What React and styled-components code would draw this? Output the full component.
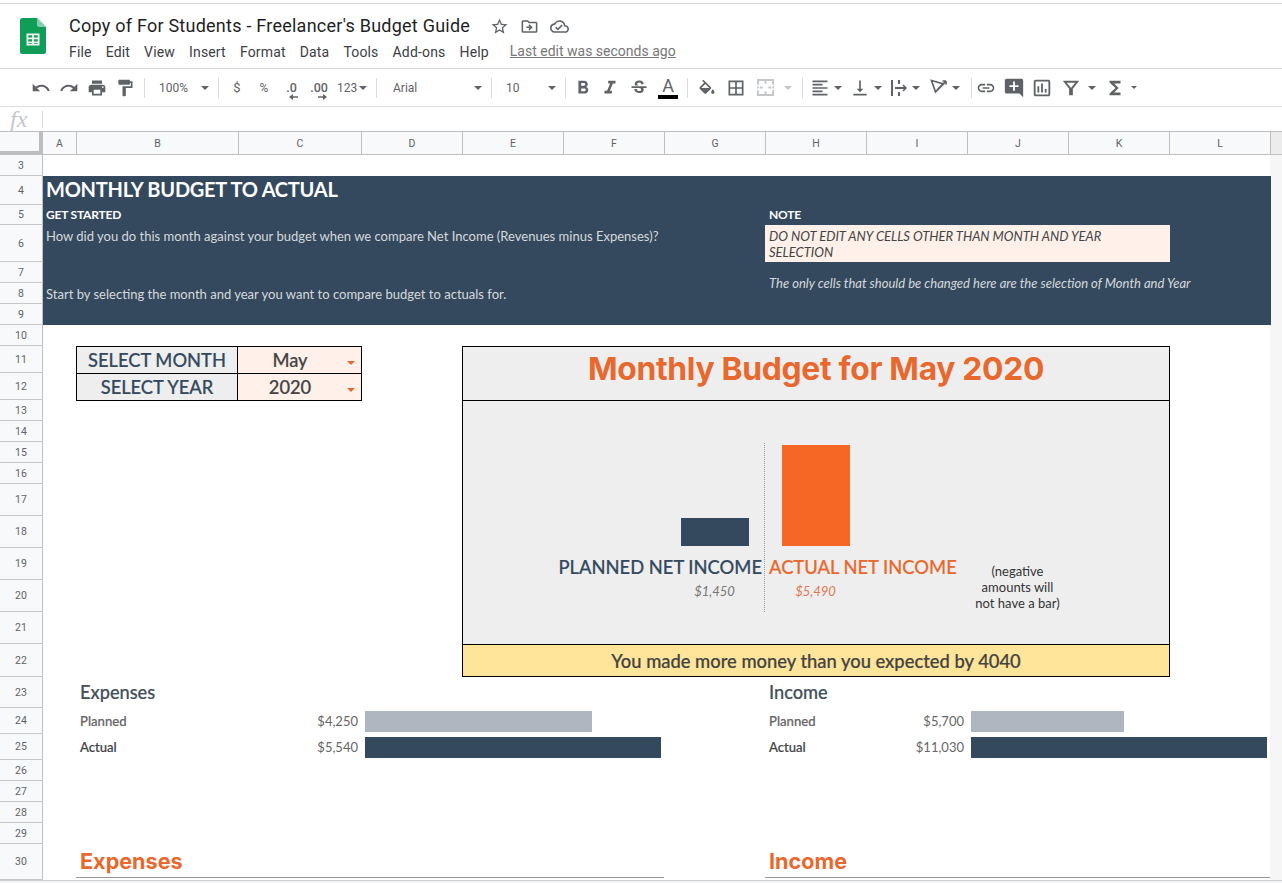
import React from 'react';
import styled, { createGlobalStyle } from 'styled-components';
import {
  MdUndo, MdRedo, MdPrint, MdFormatPaint, MdFormatBold, MdFormatItalic, MdStrikethroughS,
  MdBorderAll, MdFormatAlignLeft, MdVerticalAlignBottom, MdLink,
  MdAddComment, MdOutlineInsertChart, MdFunctions, MdStarBorder, MdOutlineDriveFileMove,
  MdOutlineCloudDone,
} from 'react-icons/md';

const NAVY = '#34495e';
const ORANGE = '#e8692e';
const PEACH = '#fff0ea';

const COL = { A: 2, B: 3, C: 4, D: 5, E: 6, F: 7, G: 8, H: 9, I: 10, J: 11, K: 12, L: 13 };
const COL_NAMES = ['A', 'B', 'C', 'D', 'E', 'F', 'G', 'H', 'I', 'J', 'K', 'L'];
const ROW_HEIGHTS = {
  3: 21, 4: 29, 5: 20, 6: 37, 7: 21, 8: 21, 9: 21, 10: 21, 11: 27, 12: 27, 13: 21, 14: 21, 15: 21, 16: 21,
  17: 32, 18: 32, 19: 32, 20: 32, 21: 32, 22: 33, 23: 31, 24: 26, 25: 26, 26: 21, 27: 21, 28: 21, 29: 21, 30: 36,
};
const ROW_NUMBERS = Object.keys(ROW_HEIGHTS).map(Number);

const GlobalStyle = createGlobalStyle`
  html, body {
    margin: 0;
    padding: 0;
    background: #fff;
    overflow: hidden;
  }
  * {
    box-sizing: border-box;
  }
`;

const Page = styled.div`
  width: 1282px;
  height: 883px;
  overflow: hidden;
  display: flex;
  flex-direction: column;
  font-family: Roboto, "Liberation Sans", sans-serif;
  padding-top: 3px;
`;

const Header = styled.header`
  height: 65px;
  border-top: 1px solid #dcdcdc;
  display: flex;
  padding: 14px 0 0 20px;
`;

const HeaderText = styled.div`
  margin-left: 23px;
  display: flex;
  flex-direction: column;
`;

const TitleRow = styled.div`
  display: flex;
  align-items: center;
  height: 16px;
`;

const DocTitle = styled.div`
  font-size: 18px;
  line-height: 16px;
  color: #1f1f1f;
  letter-spacing: 0.24px;
  width: 415px;
  white-space: nowrap;
`;

const TitleIcon = styled.span`
  width: 30px;
  display: flex;
  justify-content: center;
  color: #5f6368;
  font-size: 19px;
`;

const MenuRow = styled.nav`
  display: flex;
  align-items: center;
  margin-top: 9px;
  height: 18px;
`;

const MenuItem = styled.span`
  font-size: 14px;
  letter-spacing: 0.17px;
  color: #3c4043;
  margin-right: 14px;
  white-space: nowrap;
`;

const LastEdit = styled.span`
  font-size: 14px;
  color: #777;
  text-decoration: underline;
  margin: -2px 0 0 7px;
  white-space: nowrap;
`;

const Toolbar = styled.div`
  height: 39px;
  border-top: 1px solid #dadce0;
  border-bottom: 1px solid #dadce0;
  display: flex;
  align-items: center;
  padding-left: 27px;
  flex-shrink: 0;
`;

const ToolButton = styled.div`
  width: ${p => p.$w || 28}px;
  height: 28px;
  display: flex;
  align-items: center;
  justify-content: ${p => (p.$split ? 'flex-start' : 'center')};
  padding-left: ${p => (p.$split ? 2 : 0)}px;
  color: ${p => (p.$muted ? '#c4c7ca' : '#5f6368')};
  font-size: ${p => p.$size || 20}px;
  flex-shrink: 0;
`;

const ToolText = styled.span`
  font-size: ${p => p.$size};
  color: #5f6368;
  line-height: 1;
`;

const ToolSelect = styled.div`
  width: ${p => p.$w}px;
  height: 28px;
  padding-left: ${p => p.$pad}px;
  display: flex;
  align-items: center;
  justify-content: space-between;
  padding-right: 4px;
  font-size: 12px;
  color: #5f6368;
  flex-shrink: 0;
`;

const Separator = styled.div`
  width: 1px;
  height: 20px;
  background: #dadce0;
  margin: 0 ${p => p.$r ?? 5}px 0 ${p => p.$l ?? 5}px;
  flex-shrink: 0;
`;

const Caret = styled.span`
  width: 0;
  height: 0;
  border-left: ${p => p.$half || 4}px solid transparent;
  border-right: ${p => p.$half || 4}px solid transparent;
  border-top: ${p => p.$half || 4}px solid ${p => (p.$muted ? '#c4c7ca' : '#5f6368')};
  margin-left: ${p => p.$gap || 0}px;
  flex-shrink: 0;
`;

const DecimalMark = styled.div`
  display: flex;
  flex-direction: column;
  align-items: center;
  padding-top: 7px;
  font-size: 12.5px;
  font-weight: 500;
  color: #5f6368;
  line-height: 12px;
`;

const DecimalArrow = styled.svg`
  width: 9px;
  height: 6px;
  margin: 0 0 0 ${p => p.$shift}px;
`;

const TextColorMark = styled.div`
  display: flex;
  flex-direction: column;
  align-items: center;
  width: 20px;
  font-size: 18px;
  line-height: 17px;
  color: #5f6368;
`;

const ColorBar = styled.div`
  width: 20px;
  height: 4px;
  background: #000;
  margin-top: 1px;
`;

const FormulaBar = styled.div`
  height: 24px;
  display: flex;
  align-items: center;
  flex-shrink: 0;
`;

const FxMark = styled.span`
  width: 42px;
  padding-left: 10px;
  font-family: "Liberation Serif", serif;
  font-style: italic;
  font-size: 24px;
  line-height: 24px;
  color: #c4c7ca;
`;

const FormulaDivider = styled.div`
  width: 1px;
  height: 17px;
  background: #dadce0;
`;

const SheetGrid = styled.div`
  display: grid;
  grid-template-columns: 43px 33px 162px 123px repeat(9, 101px) 12px;
  grid-template-rows: 23px ${ROW_NUMBERS.map(n => `${ROW_HEIGHTS[n]}px`).join(' ')};
  flex-shrink: 0;
  font-family: Lato, "Liberation Sans", sans-serif;
  border-top: 1px solid #c0c0c0;
  height: 749px;
  overflow: hidden;
`;

const Corner = styled.div`
  grid-column: 1;
  grid-row: 1;
  background: #f8f9fa;
  border-right: 4px solid #bdbdbd;
  border-bottom: 4px solid #bdbdbd;
`;

const ColumnHead = styled.div`
  grid-row: 1;
  grid-column: ${p => COL[p.$name]};
  background: #f8f9fa;
  border-left: ${p => (p.$name === 'A' ? 'none' : '1px solid #c0c0c0')};
  border-bottom: 1px solid #c0c0c0;
  display: flex;
  align-items: center;
  justify-content: center;
  font-family: Roboto, sans-serif;
  font-size: 10.5px;
  color: #5f6368;
`;

const RowHead = styled.div`
  grid-column: 1;
  grid-row: ${p => p.$n - 1};
  background: #f8f9fa;
  border-right: 1px solid #c0c0c0;
  border-bottom: 1px solid #c8c8c8;
  display: flex;
  align-items: center;
  justify-content: center;
  font-family: Roboto, sans-serif;
  font-size: 10.5px;
  color: #5f6368;
`;

const ScrollTrack = styled.div`
  grid-column: 14;
  grid-row: 2 / -1;
  background: #f6f6f6;
`;

const ScrollCorner = styled.div`
  grid-column: 14;
  grid-row: 1;
  background: #ececec;
  border-left: 1px solid #c0c0c0;
  border-bottom: 1px solid #c0c0c0;
`;

const Cell = styled.div`
  grid-column: ${p => COL[p.$from]} / ${p => COL[p.$to || p.$from] + 1};
  grid-row: ${p => p.$top - 1} / ${p => p.$bottom || p.$top};
  min-width: 0;
  display: flex;
  align-items: center;
  white-space: nowrap;
`;

const Banner = styled(Cell)`
  background: ${NAVY};
  margin-right: -1px;
`;

const BannerHeading = styled(Cell)`
  padding: 0 0 3px 3px;
  font-size: 20px;
  letter-spacing: -0.25px;
  font-weight: 700;
  color: #fff;
`;

const BannerLabel = styled(Cell)`
  padding: 0 0 2px ${p => p.$pad || 3}px;
  font-size: 12px;
  font-weight: 700;
  color: #fff;
  letter-spacing: -0.2px;
`;

const BannerText = styled(Cell)`
  align-items: ${p => (p.$top === 6 ? 'flex-start' : 'center')};
  padding-top: ${p => (p.$top === 6 ? 3 : 0)}px;
  padding-left: ${p => p.$pad || 3}px;
  font-size: 13.03px;
  color: #d6d9dc;
  font-style: ${p => (p.$italic ? 'italic' : 'normal')};
`;

const NoteBox = styled(Cell)`
  background: ${PEACH};
  padding: 0 4px;
  margin-right: -1px;
  font-size: 13px;
  line-height: 16px;
  font-style: italic;
  color: #434343;
  white-space: normal;
`;

const SelectLabel = styled(Cell)`
  justify-content: center;
  background: #eeeeee;
  border: 1px solid #000;
  margin-bottom: ${p => (p.$last ? -1 : 0)}px;
  border-bottom: ${p => (p.$last ? '1px solid #000' : 'none')};
  font-size: 18.3px;
  font-weight: 500;
  -webkit-text-stroke: 0.2px;
  color: ${NAVY};
`;

const SelectValue = styled(Cell)`
  justify-content: center;
  padding-right: 19px;
  background: ${PEACH};
  border: 1px solid #000;
  border-left: none;
  margin-right: -1px;
  margin-bottom: ${p => (p.$last ? -1 : 0)}px;
  border-bottom: ${p => (p.$last ? '1px solid #000' : 'none')};
  font-size: 18.3px;
  font-weight: 500;
  -webkit-text-stroke: 0.2px;
  color: #434343;
  position: relative;
`;

const DropCaret = styled.span`
  position: absolute;
  right: 6px;
  top: 14px;
  border-left: 4px solid transparent;
  border-right: 4px solid transparent;
  border-top: 4px solid ${ORANGE};
`;

const ChartTitle = styled(Cell)`
  justify-content: center;
  background: #eeeeee;
  border: 1px solid #000;
  margin: 0 -1px -1px 0;
  padding-bottom: 10px;
  font-family: Inter, Lato, sans-serif;
  font-size: 31.8px;
  font-weight: 700;
  letter-spacing: -0.3px;
  color: ${ORANGE};
`;

const ChartBody = styled(Cell)`
  background: #eeeeee;
  border-left: 1px solid #000;
  border-right: 1px solid #000;
  margin-right: -1px;
`;

const DottedLine = styled(Cell)`
  border-right: 1px dotted #999;
  margin: 1px 0 0 0;
`;

const BarSlot = styled(Cell)`
  align-items: flex-end;
  justify-content: center;
  padding-bottom: 2px;
`;

const ChartBar = styled.div`
  width: 68px;
  height: ${p => p.$h}px;
  background: ${p => p.$color};
`;

const NetLabel = styled(Cell)`
  align-items: flex-end;
  justify-content: ${p => (p.$right ? 'flex-end' : 'flex-start')};
  padding: ${p => (p.$right ? '0 3px 2px 0' : '0 0 2px 4px')};
  font-size: 18.35px;
  font-weight: 500;
  -webkit-text-stroke: 0.2px;
  color: ${p => p.$color};
`;

const NetAmount = styled(Cell)`
  justify-content: center;
  align-items: flex-start;
  padding-top: 3px;
  font-size: 13px;
  font-style: italic;
  color: ${p => p.$color};
`;

const NegativeNote = styled(Cell)`
  justify-content: center;
  text-align: center;
  padding-top: 13px;
  font-size: 13px;
  line-height: 16px;
  color: #333;
  white-space: pre-line;
`;

const Verdict = styled(Cell)`
  justify-content: center;
  background: #ffe599;
  border: 1px solid #000;
  margin-right: -1px;
  font-size: 18.35px;
  font-weight: 500;
  -webkit-text-stroke: 0.2px;
  color: #434343;
`;

const GroupTitle = styled(Cell)`
  padding-left: 4px;
  padding-bottom: 2px;
  font-size: 18.2px;
  font-weight: 500;
  -webkit-text-stroke: 0.2px;
  color: #434f5b;
`;

const RowLabel = styled(Cell)`
  padding-left: 4px;
  font-size: 13.1px;
  font-weight: 500;
  -webkit-text-stroke: 0.2px;
  color: ${p => (p.$strong ? '#434343' : '#666')};
`;

const RowValue = styled(Cell)`
  justify-content: flex-end;
  padding-right: 3px;
  font-size: 13px;
  color: #666;
`;

const BarCell = styled(Cell)`
  padding-left: 4px;
`;

const MeterBar = styled.div`
  height: 21px;
  background: ${p => p.$color};
`;

const SectionTitle = styled(Cell)`
  padding-left: 4px;
  margin-bottom: 2px;
  border-bottom: 1px solid #999;
  font-family: Inter, Lato, sans-serif;
  font-size: 21.6px;
  font-weight: 700;
  color: ${ORANGE};
`;

const SheetFoot = styled.div`
  flex: 1;
  background: #f1f3f4;
  border-top: 1px solid #cfcfcf;
`;

const SheetsLogo = () => (
  <svg width="26" height="36" viewBox="0 0 26 36">
    <path d="M2.5 0H17l9 9v24.5a2.5 2.5 0 0 1-2.5 2.5h-21A2.5 2.5 0 0 1 0 33.5v-31A2.5 2.5 0 0 1 2.5 0z" fill="#0f9d58" />
    <path d="M17 0l9 9h-6.5A2.5 2.5 0 0 1 17 6.5z" fill="#87ceac" />
    <path d="M6.5 15.5h13v12h-13z M8.3 17.3v2.3h3.8v-2.3z M13.9 17.3v2.3h3.8v-2.3z M8.3 21.3v2.3h3.8v-2.3z M13.9 21.3v2.3h3.8v-2.3z M8.3 25v.8h3.8V25z M13.9 25v.8h3.8V25z" fill="#f1f1f1" fillRule="evenodd" />
  </svg>
);

const FillIcon = () => (
  <svg width="20" height="20" viewBox="0 0 24 20" fill="currentColor">
    <path d="M16.56 8.94L7.62 0 6.21 1.41l2.38 2.38-5.15 5.15c-.59.59-.59 1.54 0 2.12l5.5 5.5c.29.29.68.44 1.06.44s.77-.15 1.06-.44l5.5-5.5c.59-.58.59-1.53 0-2.12zM5.21 10L10 5.21 14.79 10H5.21zM19 11.5s-2 2.17-2 3.5c0 1.1.9 2 2 2s2-.9 2-2c0-1.33-2-3.5-2-3.5z" />
  </svg>
);

const MergeIcon = () => (
  <svg width="17" height="17" viewBox="0 0 18 18" fill="none" stroke="currentColor" strokeWidth="2">
    <path d="M1 6V1h16v5M1 12v5h16v-5M1 8v2M17 8v2M9 1v4M9 13v4M3 9h3M12 9h3" />
  </svg>
);

const WrapIcon = () => (
  <svg width="18" height="18" viewBox="0 0 18 18" fill="none" stroke="currentColor" strokeWidth="2">
    <path d="M2 1v16M9 1v4M9 8v2M9 13v4M5 9h10" />
    <path d="M13 6l3 3-3 3" strokeWidth="1.5" />
  </svg>
);

const RotateIcon = () => (
  <svg width="18" height="18" viewBox="0 0 18 18" fill="none" stroke="currentColor" strokeWidth="1.7">
    <path d="M1.5 1.5l12 3.5-8 8z" />
    <path d="M7 11l9-9M16 2h-3.5M16 2v3.5" />
  </svg>
);

const FunnelIcon = () => (
  <svg width="16" height="16" viewBox="0 0 18 18" fill="none" stroke="currentColor" strokeWidth="2.2">
    <path d="M2 2h14L10 9.5V16H8V9.5z" />
  </svg>
);

const ArrowLeft = () => (
  <DecimalArrow $shift={4} viewBox="0 0 9 6">
    <path d="M9 2.3H4V0L0 3l4 3V3.7h5z" fill="#5f6368" />
  </DecimalArrow>
);

const ArrowRight = () => (
  <DecimalArrow $shift={7} viewBox="0 0 9 6">
    <path d="M0 2.3h5V0l4 3-4 3V3.7H0z" fill="#5f6368" />
  </DecimalArrow>
);

const MENU = ['File', 'Edit', 'View', 'Insert', 'Format', 'Data', 'Tools', 'Add-ons', 'Help'];

const App = () => {
  return (
    <Page>
      <GlobalStyle />
      <Header>
        <SheetsLogo />
        <HeaderText>
          <TitleRow>
            <DocTitle>Copy of For Students - Freelancer's Budget Guide</DocTitle>
            <TitleIcon><MdStarBorder /></TitleIcon>
            <TitleIcon><MdOutlineDriveFileMove /></TitleIcon>
            <TitleIcon><MdOutlineCloudDone /></TitleIcon>
          </TitleRow>
          <MenuRow>
            {MENU.map(label => (
              <MenuItem key={label}>{label}</MenuItem>
            ))}
            <LastEdit>Last edit was seconds ago</LastEdit>
          </MenuRow>
        </HeaderText>
      </Header>

      <Toolbar>
        <ToolButton><MdUndo /></ToolButton>
        <ToolButton><MdRedo /></ToolButton>
        <ToolButton><MdPrint /></ToolButton>
        <ToolButton><MdFormatPaint /></ToolButton>
        <Separator />
        <ToolSelect $w={63} $pad={9}>100%<Caret /></ToolSelect>
        <Separator />
        <ToolButton $w={26}><ToolText $size="13px">$</ToolText></ToolButton>
        <ToolButton><ToolText $size="12px">%</ToolText></ToolButton>
        <ToolButton $w={27}><DecimalMark>.0<ArrowLeft /></DecimalMark></ToolButton>
        <ToolButton><DecimalMark>.00<ArrowRight /></DecimalMark></ToolButton>
        <ToolSelect $w={38} $pad={4}>123<Caret /></ToolSelect>
        <Separator />
        <ToolSelect $w={104} $pad={11}>Arial<Caret /></ToolSelect>
        <Separator />
        <ToolSelect $w={63} $pad={9}>10<Caret /></ToolSelect>
        <Separator />
        <ToolButton $w={23} $size={22}><MdFormatBold /></ToolButton>
        <ToolButton $w={32} $size={22}><MdFormatItalic /></ToolButton>
        <ToolButton $w={26} $size={20}><MdStrikethroughS /></ToolButton>
        <ToolButton $w={32}><TextColorMark>A<ColorBar /></TextColorMark></ToolButton>
        <Separator $l={3} />
        <ToolButton><FillIcon /></ToolButton>
        <ToolButton $w={30}><MdBorderAll /></ToolButton>
        <ToolButton $muted><MergeIcon /></ToolButton>
        <ToolButton $w={18}><Caret $muted /></ToolButton>
        <Separator />
        <ToolButton $w={40} $split><MdFormatAlignLeft /><Caret $gap={4} /></ToolButton>
        <ToolButton $w={40} $split><MdVerticalAlignBottom /><Caret $gap={4} /></ToolButton>
        <ToolButton $w={40} $split><WrapIcon /><Caret $gap={4} /></ToolButton>
        <ToolButton $w={40} $split><RotateIcon /><Caret $gap={4} /></ToolButton>
        <Separator $l={3} $r={0} />
        <ToolButton><MdLink /></ToolButton>
        <ToolButton $size={22}><MdAddComment /></ToolButton>
        <ToolButton $size={22}><MdOutlineInsertChart /></ToolButton>
        <ToolButton $w={29}><FunnelIcon /></ToolButton>
        <ToolButton $w={14}><Caret /></ToolButton>
        <ToolButton $w={32} $size={22}><MdFunctions /></ToolButton>
        <ToolButton $w={6}><Caret $half={3} /></ToolButton>
      </Toolbar>

      <FormulaBar>
        <FxMark>fx</FxMark>
        <FormulaDivider />
      </FormulaBar>

      <SheetGrid>
        <Corner />
        {COL_NAMES.map(name => <ColumnHead key={name} $name={name}>{name}</ColumnHead>)}
        <ScrollCorner />
        {ROW_NUMBERS.map(n => <RowHead key={n} $n={n}>{n}</RowHead>)}

        <ScrollTrack />
        <Banner $from="A" $to="L" $top={4} $bottom={9} />
        <BannerHeading $from="A" $to="F" $top={4}>MONTHLY BUDGET TO ACTUAL</BannerHeading>
        <BannerLabel $from="A" $to="F" $top={5}>GET STARTED</BannerLabel>
        <BannerText $from="A" $to="G" $top={6}>How did you do this month against your budget when we compare Net Income (Revenues minus Expenses)?</BannerText>
        <BannerText $from="A" $to="G" $top={8}>Start by selecting the month and year you want to compare budget to actuals for.</BannerText>
        <BannerLabel $from="H" $to="K" $top={5} $pad={4}>NOTE</BannerLabel>
        <NoteBox $from="H" $to="K" $top={6}>DO NOT EDIT ANY CELLS OTHER THAN MONTH AND YEAR SELECTION</NoteBox>
        <BannerText $from="H" $to="L" $top={7} $bottom={8} $pad={4} $italic>The only cells that should be changed here are the selection of Month and Year</BannerText>

        <SelectLabel $from="B" $top={11}>SELECT MONTH</SelectLabel>
        <SelectValue $from="C" $top={11}>May<DropCaret /></SelectValue>
        <SelectLabel $from="B" $top={12} $last>SELECT YEAR</SelectLabel>
        <SelectValue $from="C" $top={12} $last>2020<DropCaret /></SelectValue>

        <ChartBody $from="E" $to="K" $top={13} $bottom={21} />
        <ChartTitle $from="E" $to="K" $top={11} $bottom={12}>Monthly Budget for May 2020</ChartTitle>
        <DottedLine $from="G" $top={15} $bottom={20} />
        <BarSlot $from="G" $top={15} $bottom={18}><ChartBar $h={28} $color={NAVY} /></BarSlot>
        <BarSlot $from="H" $top={15} $bottom={18}><ChartBar $h={101} $color="#f66725" /></BarSlot>
        <NetLabel $from="E" $to="G" $top={19} $right $color={NAVY}>PLANNED NET INCOME</NetLabel>
        <NetLabel $from="H" $to="I" $top={19} $color={ORANGE}>ACTUAL NET INCOME</NetLabel>
        <NetAmount $from="G" $top={20} $color="#777">$1,450</NetAmount>
        <NetAmount $from="H" $top={20} $color="#e07a55">$5,490</NetAmount>
        <NegativeNote $from="J" $top={19} $bottom={20}>{'(negative\namounts will\nnot have a bar)'}</NegativeNote>
        <Verdict $from="E" $to="K" $top={22}>You made more money than you expected by 4040</Verdict>

        <GroupTitle $from="B" $top={23}>Expenses</GroupTitle>
        <RowLabel $from="B" $top={24}>Planned</RowLabel>
        <RowValue $from="C" $top={24}>$4,250</RowValue>
        <BarCell $from="D" $to="F" $top={24}><MeterBar style={{ width: 227 }} $color="#aeb6bf" /></BarCell>
        <RowLabel $from="B" $top={25} $strong>Actual</RowLabel>
        <RowValue $from="C" $top={25}>$5,540</RowValue>
        <BarCell $from="D" $to="F" $top={25}><MeterBar style={{ width: 296 }} $color={NAVY} /></BarCell>

        <GroupTitle $from="H" $top={23}>Income</GroupTitle>
        <RowLabel $from="H" $top={24}>Planned</RowLabel>
        <RowValue $from="I" $top={24}>$5,700</RowValue>
        <BarCell $from="J" $to="L" $top={24}><MeterBar style={{ width: 153 }} $color="#aeb6bf" /></BarCell>
        <RowLabel $from="H" $top={25} $strong>Actual</RowLabel>
        <RowValue $from="I" $top={25}>$11,030</RowValue>
        <BarCell $from="J" $to="L" $top={25}><MeterBar style={{ width: 296 }} $color={NAVY} /></BarCell>

        <SectionTitle $from="B" $to="F" $top={30}>Expenses</SectionTitle>
        <SectionTitle $from="H" $to="L" $top={30}>Income</SectionTitle>
      </SheetGrid>
      <SheetFoot />
    </Page>
  );
};

export default App;
